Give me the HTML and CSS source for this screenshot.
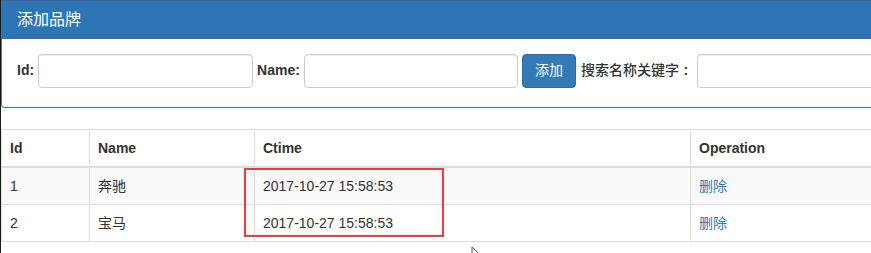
FILE: index.html
```html
<!DOCTYPE html>
<html lang="zh-CN">
<head>
<meta charset="utf-8">
<title>品牌列表</title>
<link rel="stylesheet" href="styles.css">
</head>
<body>
<div class="page">
  <div class="panel">
    <div class="panel-heading">
      <h3 class="panel-title">添加品牌</h3>
    </div>
    <div class="panel-body">
      <label class="lbl">Id:</label>
      <input class="form-control ctl-a" type="text">
      <label class="lbl">Name:</label>
      <input class="form-control ctl-b" type="text">
      <button class="btn" type="button">添加</button>
      <label class="lbl lbl-cn">搜索名称关键字<span class="colon">:</span></label>
      <input class="form-control ctl-c" type="text">
    </div>
  </div>

  <div class="table-wrap">
    <table class="table">
      <colgroup>
        <col class="c-id"><col class="c-name"><col class="c-time"><col class="c-op">
      </colgroup>
      <thead>
        <tr><th>Id</th><th>Name</th><th>Ctime</th><th>Operation</th></tr>
      </thead>
      <tbody>
        <tr class="odd"><td>1</td><td>奔驰</td><td>2017-10-27 15:58:53</td><td><a href="#">删除</a></td></tr>
        <tr><td>2</td><td>宝马</td><td>2017-10-27 15:58:53</td><td><a href="#">删除</a></td></tr>
      </tbody>
    </table>
    <div class="highlight"></div>
    <svg class="cursor" width="12" height="18" viewBox="0 0 12 18">
      <path d="M1 1 L1 15 L4.5 11.5 L7 17 L9 16 L6.5 10.5 L11 10.5 Z" fill="#fff" stroke="#555" stroke-width="1"/>
    </svg>
  </div>
</div>
</body>
</html>
```

FILE: styles.css
```css
html, body {
  margin: 0;
  padding: 0;
  overflow: hidden;
  background: #fff;
}
body {
  font-family: "Liberation Sans", "Noto Sans CJK SC", Arial, sans-serif;
  font-size: 14px;
  color: #333;
  line-height: 1.42857;
}
.page {
  width: 1300px;
  border-left: 1px solid #1a1a1a;
  min-height: 253px;
}
.panel {
  border: 1px solid #337ab7;
  border-top-color: #4f5f90;
  border-radius: 0 0 4px 4px;
  margin-bottom: 21px;
}
.panel-heading {
  background: #2e75b6;
  color: #fff;
  padding: 10px 15px;
}
.panel-title {
  margin: 0;
  font-size: 16px;
  font-weight: 400;
  line-height: 18px;
}
.panel-body {
  display: flex;
  align-items: center;
  gap: 4px;
  padding: 15px 15px 19px;
}
.lbl {
  font-weight: 700;
  color: #333;
}
.lbl-cn {
  font-weight: 500;
  margin-left: 1px;
}
.colon {
  display: inline-block;
  width: 14px;
  text-align: center;
  font-weight: 700;
}
.form-control {
  box-sizing: border-box;
  height: 34px;
  padding: 6px 12px;
  border: 1px solid #ccc;
  border-radius: 4px;
  box-shadow: inset 0 1px 1px rgba(0,0,0,.075);
  background: #fff;
  font: inherit;
  margin: 0;
}
.ctl-a { width: 215px; }
.ctl-b { width: 214px; }
.ctl-c { width: 215px; }
.btn {
  box-sizing: border-box;
  height: 34px;
  width: 54px;
  padding: 6px 12px;
  background: #337ab7;
  border: 1px solid #2e6da4;
  border-radius: 4px;
  color: #fff;
  font: inherit;
  margin: 0;
}
.table-wrap {
  position: relative;
}
.table {
  border-collapse: collapse;
  border-spacing: 0;
  width: 1000px;
  border: 1px solid #ddd;
}
.c-id { width: 88px; }
.c-name { width: 165px; }
.c-time { width: 436px; }
.table th, .table td {
  border: 1px solid #ddd;
  padding: 8px;
  line-height: 20px;
  text-align: left;
  vertical-align: top;
}
.table th {
  font-weight: 700;
  border-bottom-width: 2px;
}
.table tr.odd td {
  background: #f9f9f9;
}
.table a {
  color: #337ab7;
  text-decoration: none;
}
.highlight {
  position: absolute;
  left: 243px;
  top: 39px;
  width: 196px;
  height: 65px;
  border: 2px solid #ee3b3b;
}
.cursor {
  position: absolute;
  left: 470px;
  top: 117px;
}
```
